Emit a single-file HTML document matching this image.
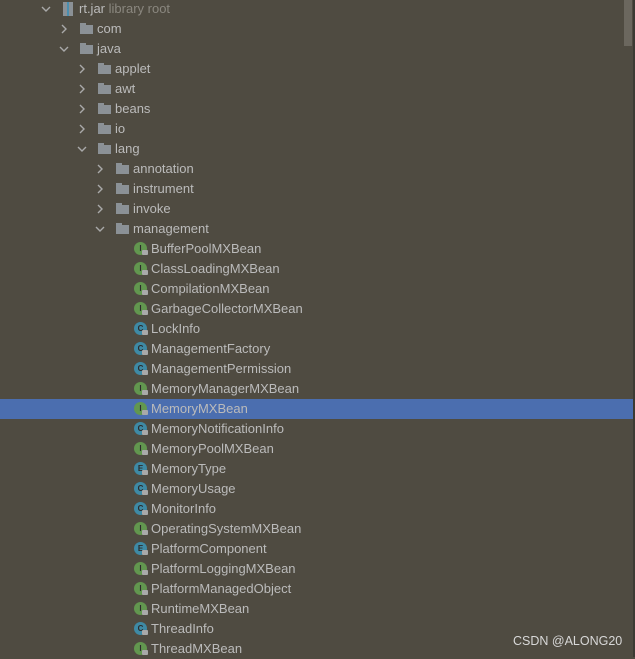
<!DOCTYPE html>
<html><head><meta charset="utf-8"><style>
html,body{margin:0;padding:0}
body{width:635px;height:657px;background:#4f4b41;position:relative;overflow:hidden;font-family:"Liberation Sans","DejaVu Sans",sans-serif;font-size:13px;color:#bbbbbb}
.row{position:absolute;left:0;width:633px;height:20px}
.sel{background:#4b6eaf}
.t{position:absolute;top:2px;line-height:16px;white-space:nowrap}
.chev{position:absolute;top:5px;width:10px;height:10px}
.fold{position:absolute;top:4px;width:13px;height:11px}
.fold:before{content:"";position:absolute;left:0;top:0;width:6px;height:3px;background:#8b9196}
.fold:after{content:"";position:absolute;left:0;top:2px;width:13px;height:9px;background:#8b9196}
.ic{position:absolute;top:3px;width:13px;height:13px;border-radius:50%;color:#2b2b2b;font-size:8px;font-weight:bold;text-align:center;line-height:13px}
.g{background:#62974f}
.b{background:#3e8aa5}
.lk{position:absolute;top:11px;width:6px;height:5px;background:#a9a9a9;border-radius:1px}
.scroll{position:absolute;left:624px;top:0;width:8px;height:46px;background:#6b675e}
.edge{position:absolute;left:633px;top:0;width:2px;height:657px;background:#3c3a33}
.wm{position:absolute;left:513px;top:634px;font-size:12.5px;color:#d8d8d8}
</style></head><body>
<div class="scroll"></div><div class="edge"></div>
<div id="tree"></div>
<div class="wm">CSDN @ALONG20</div>
<script>
var rows=[
[0,'jar','rt.jar',1],
[1,'f','com',0],[1,'f','java',1],
[2,'f','applet',0],[2,'f','awt',0],[2,'f','beans',0],[2,'f','io',0],[2,'f','lang',1],
[3,'f','annotation',0],[3,'f','instrument',0],[3,'f','invoke',0],[3,'f','management',1],
[4,'I','BufferPoolMXBean'],[4,'I','ClassLoadingMXBean'],[4,'I','CompilationMXBean'],[4,'I','GarbageCollectorMXBean'],
[4,'C','LockInfo'],[4,'C','ManagementFactory'],[4,'C','ManagementPermission'],[4,'I','MemoryManagerMXBean'],
[4,'I','MemoryMXBean'],[4,'C','MemoryNotificationInfo'],[4,'I','MemoryPoolMXBean'],[4,'E','MemoryType'],
[4,'C','MemoryUsage'],[4,'C','MonitorInfo'],[4,'I','OperatingSystemMXBean'],[4,'E','PlatformComponent'],
[4,'I','PlatformLoggingMXBean'],[4,'I','PlatformManagedObject'],[4,'I','RuntimeMXBean'],[4,'C','ThreadInfo'],[4,'I','ThreadMXBean']];
var h='';
rows.forEach(function(r,i){
 var top=-1+20*i, x=18*r[0];
 h+='<div class="row'+(r[2]=='MemoryMXBean'?' sel':'')+'" style="top:'+top+'px">';
 if(r[1]=='f'||r[1]=='jar'){
  var d=r[3]?'M1 3 L5 7 L9 3':'M3 1 L7 5 L3 9';
  h+='<svg class="chev" style="left:'+(41+x)+'px" viewBox="0 0 10 10"><path d="'+d+'" fill="none" stroke="#a9a9a9" stroke-width="1.4"/></svg>';
 }
 if(r[1]=='jar'){
  h+='<div style="position:absolute;left:'+(63+x)+'px;top:3px;width:10px;height:14px;background:#8b9196"></div><div style="position:absolute;left:'+(67+x)+'px;top:3px;width:2px;height:14px;background:#4a8fb0"></div>';
  h+='<div class="t" style="left:'+(79+x)+'px">rt.jar <span style="color:#8a877f">library root</span></div>';
 } else if(r[1]=='f'){
  h+='<div class="fold" style="left:'+(62+x)+'px"></div><div class="t" style="left:'+(79+x)+'px">'+r[2]+'</div>';
 } else {
  var c=r[1]=='I'?'g':'b';
  h+='<div class="ic '+c+'" style="left:'+(62+x)+'px">'+r[1]+'</div><div class="lk" style="left:'+(70+x)+'px"></div>';
  h+='<div class="t" style="left:'+(79+x)+'px">'+r[2]+'</div>';
 }
 h+='</div>';
});
document.getElementById('tree').innerHTML=h;
</script>
</body></html>
